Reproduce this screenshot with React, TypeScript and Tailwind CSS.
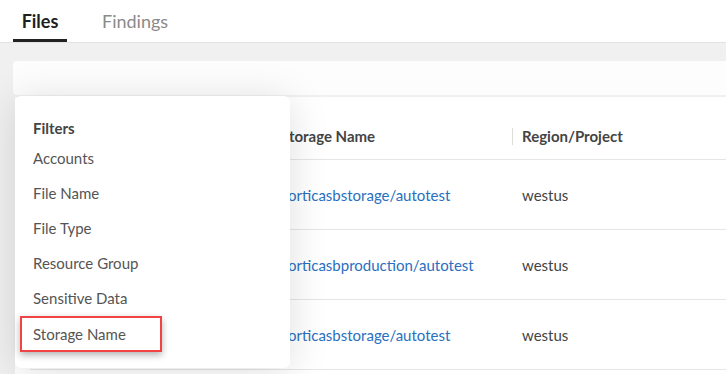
import React from "react";

const filterOptions = ["Accounts", "File Name", "File Type", "Resource Group", "Sensitive Data"];

const rows = [
  { storage: "corticasbstorage/autotest", region: "westus" },
  { storage: "corticasbproduction/autotest", region: "westus" },
  { storage: "corticasbstorage/autotest", region: "westus" }
];

function Tabs() {
  return (
    <div className="flex h-[43px] items-end border-b border-[#e3e3e3] bg-white pl-[13px]">
      <button className="flex h-[42px] w-[54px] items-center justify-center border-b-[3px] border-[#222] pt-[3px] text-[18px] font-bold text-[#1f1f1f]">
        Files
      </button>
      <button className="ml-[26px] flex h-[42px] items-center px-[9px] pb-[3px] pt-[3px] text-[18px] text-[#8a8a8a]">
        Findings
      </button>
    </div>
  );
}

function FilterMenu() {
  return (
    <div className="absolute left-0 top-[-1px] z-10 h-[272px] w-[275px] rounded-[6px] bg-white pt-[22px] shadow-[0_4px_40px_rgba(0,0,0,0.13)]">
      <div className="flex h-5 items-center pl-[18px] text-[15px] font-bold text-[#444]">Filters</div>
      <ul className="mt-[3px]">
        {filterOptions.map((option) => (
          <li key={option} className="flex h-[35px] items-center pl-[18px] text-[15px] text-[#555]">
            {option}
          </li>
        ))}
        <li className="ml-[5px] flex h-[36px] w-[142px] items-center border-2 border-[#f04444] pl-[11px] text-[15px] text-[#555] shadow-[0_3px_7px_rgba(0,0,0,0.3)]">
          Storage Name
        </li>
      </ul>
    </div>
  );
}

export default function App() {
  return (
    <div className="min-h-screen overflow-hidden bg-[#f0f0f0] font-['Lato',sans-serif]">
      <Tabs />
      <div className="pl-[13px]">
        <div className="mt-[18px] h-[34px] rounded-l-[4px] bg-[#fdfdfd]" />
        <div className="relative ml-[2px] mt-[2px] bg-white pl-[15px]">
          <FilterMenu />
          <div className="grid h-[63px] grid-cols-[243px_239px_1fr] items-center border-b border-[#e6e6e6] pt-[17px] text-[15px] font-bold text-[#444]">
            <div />
            <div className="px-[8px]">Storage Name</div>
            <div className="flex h-[17px] items-center border-l border-[#dcdcdc] pl-[9px]">Region/Project</div>
          </div>
          {rows.map((row, i) => (
            <div
              key={i}
              className="grid h-[70px] grid-cols-[243px_239px_1fr] items-center border-b border-[#e6e6e6] pt-[2px] text-[15px]"
            >
              <div />
              <div className="px-[8px] text-[#2a6fc0]">{row.storage}</div>
              <div className="pl-[10px] text-[#444]">{row.region}</div>
            </div>
          ))}
          <div className="h-[4px]" />
        </div>
      </div>
    </div>
  );
}
